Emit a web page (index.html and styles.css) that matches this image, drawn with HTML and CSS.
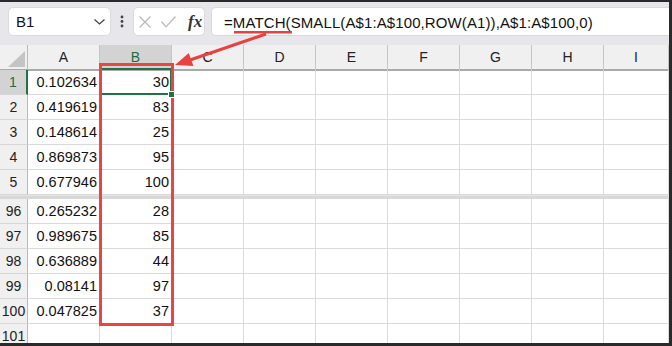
FILE: index.html
```html
<!DOCTYPE html>
<html>
<head>
<meta charset="utf-8">
<link rel="stylesheet" href="styles.css">
</head>
<body>
<div class="app">
  <div class="toolbar">
    <div class="namebox">
      <span>B1</span>
      <svg class="chev" width="11" height="6" viewBox="0 0 11 6"><polyline points="0.5,0.5 5.5,5 10.5,0.5" fill="none" stroke="#444" stroke-width="1.3"/></svg>
    </div>
    <div class="grip">
      <svg width="4" height="13" viewBox="0 0 4 13"><circle cx="2" cy="2" r="1.4" fill="#444"/><circle cx="2" cy="6.5" r="1.4" fill="#444"/><circle cx="2" cy="11" r="1.4" fill="#444"/></svg>
    </div>
    <div class="fxbox">
      <svg class="xic" width="12" height="12" viewBox="0 0 12 12"><path d="M0.5 0.5L11.5 11.5M11.5 0.5L0.5 11.5" stroke="#b8b8b8" stroke-width="1.2" fill="none"/></svg>
      <svg class="ckic" width="15" height="12" viewBox="0 0 15 12"><polyline points="0.5,5.5 5,10.8 14.5,0.5" fill="none" stroke="#b8b8b8" stroke-width="1.2"/></svg>
      <span class="fx">fx</span>
    </div>
    <div class="formula">=MATCH(SMALL(A$1:A$100,ROW(A1)),A$1:A$100,0)</div>
  </div>
  <div class="sheet">
    <div class="row head">
      <div class="corner"><div class="tri"></div></div>
      <div class="ch">A</div><div class="ch sel">B</div><div class="ch">C</div><div class="ch">D</div><div class="ch">E</div><div class="ch">F</div><div class="ch">G</div><div class="ch">H</div><div class="ch">I</div>
    </div>
    <div class="row"><div class="rh sel">1</div><div class="c">0.102634</div><div class="c active">30</div><div class="c"></div><div class="c"></div><div class="c"></div><div class="c"></div><div class="c"></div><div class="c"></div><div class="c"></div></div>
    <div class="row"><div class="rh">2</div><div class="c">0.419619</div><div class="c">83</div><div class="c"></div><div class="c"></div><div class="c"></div><div class="c"></div><div class="c"></div><div class="c"></div><div class="c"></div></div>
    <div class="row"><div class="rh">3</div><div class="c">0.148614</div><div class="c">25</div><div class="c"></div><div class="c"></div><div class="c"></div><div class="c"></div><div class="c"></div><div class="c"></div><div class="c"></div></div>
    <div class="row"><div class="rh">4</div><div class="c">0.869873</div><div class="c">95</div><div class="c"></div><div class="c"></div><div class="c"></div><div class="c"></div><div class="c"></div><div class="c"></div><div class="c"></div></div>
    <div class="row"><div class="rh">5</div><div class="c">0.677946</div><div class="c">100</div><div class="c"></div><div class="c"></div><div class="c"></div><div class="c"></div><div class="c"></div><div class="c"></div><div class="c"></div></div>
    <div class="split"></div>
    <div class="row"><div class="rh">96</div><div class="c">0.265232</div><div class="c">28</div><div class="c"></div><div class="c"></div><div class="c"></div><div class="c"></div><div class="c"></div><div class="c"></div><div class="c"></div></div>
    <div class="row"><div class="rh">97</div><div class="c">0.989675</div><div class="c">85</div><div class="c"></div><div class="c"></div><div class="c"></div><div class="c"></div><div class="c"></div><div class="c"></div><div class="c"></div></div>
    <div class="row"><div class="rh">98</div><div class="c">0.636889</div><div class="c">44</div><div class="c"></div><div class="c"></div><div class="c"></div><div class="c"></div><div class="c"></div><div class="c"></div><div class="c"></div></div>
    <div class="row"><div class="rh">99</div><div class="c">0.08141</div><div class="c">97</div><div class="c"></div><div class="c"></div><div class="c"></div><div class="c"></div><div class="c"></div><div class="c"></div><div class="c"></div></div>
    <div class="row"><div class="rh">100</div><div class="c">0.047825</div><div class="c">37</div><div class="c"></div><div class="c"></div><div class="c"></div><div class="c"></div><div class="c"></div><div class="c"></div><div class="c"></div></div>
    <div class="row"><div class="rh">101</div><div class="c"></div><div class="c"></div><div class="c"></div><div class="c"></div><div class="c"></div><div class="c"></div><div class="c"></div><div class="c"></div><div class="c"></div></div>
  </div>
</div>
<svg class="annot" width="672" height="346" viewBox="0 0 672 346">
  <line x1="234" y1="32.2" x2="292" y2="32.2" stroke="#e8413f" stroke-width="2.6"/>
  <line x1="266" y1="34" x2="190" y2="60" stroke="#e8413f" stroke-width="3"/>
  <polygon points="175,65 188.8,52.9 193.4,66.1" fill="#e8413f"/>
  <rect x="100.5" y="64.5" width="72" height="260" fill="none" stroke="#e84545" stroke-width="3"/>
</svg>
</body>
</html>
```

FILE: styles.css
```css
html, body {
  margin: 0;
  padding: 0;
}
body {
  width: 672px;
  height: 346px;
  overflow: hidden;
  position: relative;
  background: #2a2a2a;
  font-family: "Liberation Sans", Arial, sans-serif;
  color: #111;
}
.app {
  margin: 2px 3px 0 0;
  height: 341px;
  background: #fff;
  overflow: hidden;
  display: flex;
  flex-direction: column;
}
.toolbar {
  height: 43px;
  flex: none;
  box-sizing: border-box;
  background: #e6e6eb;
  display: flex;
  align-items: flex-start;
  padding: 5px 0 0 8px;
}
.namebox {
  width: 103px;
  height: 29px;
  box-sizing: border-box;
  background: #fff;
  border: 1px solid #d9d9de;
  border-radius: 5px;
  display: flex;
  align-items: center;
  justify-content: space-between;
  padding: 0 5px 0 7px;
  font-size: 15px;
  color: #111;
}
.chev { margin-top: 1px; }
.grip {
  width: 22px;
  height: 29px;
  display: flex;
  align-items: center;
  justify-content: center;
}
.fxbox {
  width: 72px;
  height: 29px;
  box-sizing: border-box;
  background: #fff;
  border: 1px solid #d9d9de;
  border-radius: 5px;
  display: flex;
  align-items: center;
  padding-left: 5px;
}
.ckic { margin-left: 10px; }
.fx {
  margin-left: 12px;
  font-family: "Liberation Serif", "Times New Roman", serif;
  font-style: italic;
  font-weight: bold;
  font-size: 17px;
  color: #333;
  line-height: 1;
}
.formula {
  flex: 1;
  height: 29px;
  margin-left: 6px;
  box-sizing: border-box;
  background: #fff;
  border: 1px solid #d9d9de;
  border-right: none;
  border-radius: 5px 0 0 5px;
  padding: 2px 0 0 12px;
  display: flex;
  align-items: center;
  font-size: 15px;
  letter-spacing: 0.1px;
  color: #111;
  white-space: nowrap;
}
.sheet {
  flex: 1;
  display: flex;
  flex-direction: column;
}
.row {
  flex: none;
  display: grid;
  grid-template-columns: 28px repeat(8, 72px) 1fr;
  height: 25px;
}
.row > div {
  box-sizing: border-box;
}
.c {
  border-right: 1px solid #dadada;
  border-bottom: 1px solid #dadada;
  font-size: 14.5px;
  line-height: 24px;
  text-align: right;
  padding-right: 2px;
  color: #111;
  white-space: nowrap;
}
.rh {
  background: #f0f0f0;
  border-right: 1px solid #b9b9b9;
  border-bottom: 1px solid #d6d6d6;
  text-align: center;
  font-size: 14px;
  line-height: 24px;
  color: #222;
}
.rh.sel {
  background: #d3d3d3;
  color: #1d6b45;
  border-right: 2px solid #217346;
}
.head .ch {
  background: #f0f0f0;
  border-right: 1px solid #c6c6c6;
  border-bottom: 2px solid #a9a9a9;
  text-align: center;
  font-size: 14px;
  line-height: 24px;
  color: #222;
}
.head .ch.sel {
  background: #d3d3d3;
  color: #1d6b45;
}
.corner {
  background: #f0f0f0;
  border-right: 1px solid #b9b9b9;
  border-bottom: 2px solid #a9a9a9;
  display: flex;
  align-items: flex-end;
  justify-content: flex-end;
  padding: 0 2px 2px 0;
}
.tri {
  width: 17px;
  height: 16px;
  background: #c4c4c4;
  clip-path: polygon(100% 0, 100% 100%, 0 100%);
}
.c.active {
  position: relative;
}
.c.active::after {
  content: "";
  position: absolute;
  left: -1px;
  right: -1px;
  top: -2px;
  bottom: -1px;
  border: 2px solid #217346;
}
.c.active::before {
  content: "";
  position: absolute;
  right: -4px;
  bottom: -4px;
  width: 5px;
  height: 5px;
  background: #217346;
  border: 1px solid #fff;
  z-index: 2;
}
.split {
  flex: none;
  height: 4px;
  background: #d8d8d8;
  border-top: 1px solid #e4e4e4;
  box-sizing: border-box;
}
.annot {
  position: absolute;
  left: 0;
  top: 0;
  pointer-events: none;
}
```
